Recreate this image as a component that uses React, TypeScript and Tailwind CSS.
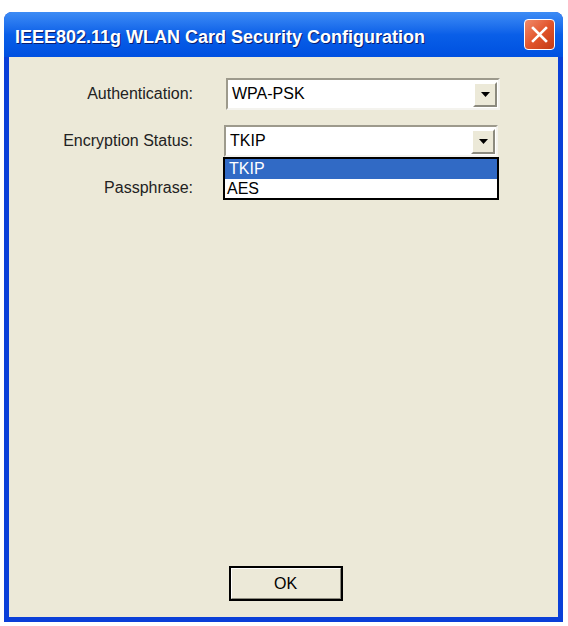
const font = { fontFamily: '"Liberation Sans", Arial, sans-serif' }

function DropButton() {
  return (
    <div className="flex h-[25px] w-[24px] items-center justify-center border-2 border-t-white border-l-white border-r-[#8c8a7e] border-b-[#8c8a7e] bg-[#ece9d8]">
      <svg width="9" height="5" viewBox="0 0 9 5">
        <path d="M0 0h9L4.5 5z" fill="#000" />
      </svg>
    </div>
  )
}

function Combo({ value }: { value: string }) {
  return (
    <div className="flex h-[32px] w-[274px] items-center justify-between border-2 border-t-[#9d9a8c] border-l-[#9d9a8c] border-r-[#f4f3ee] border-b-[#f4f3ee] bg-white pl-[4px] pr-[1px]">
      <span className="text-[16px] text-black">{value}</span>
      <DropButton />
    </div>
  )
}

export default function App() {
  return (
    <div className="h-[626px] w-[568px] bg-white pl-[4px] pt-[12px]" style={font}>
      <div className="flex h-[610px] w-[559px] flex-col overflow-hidden rounded-t-[8px] bg-[#0a3fd8]">
        {/* title bar */}
        <div className="flex h-[45px] shrink-0 items-center justify-between bg-gradient-to-b from-[#3d8cf5] via-[#0a5fe8] to-[#0050e0] pl-[11px] pr-[8px]">
          <span
            className="pt-[5px] text-[18px] font-bold text-white"
            style={{ textShadow: '1px 1px 0 #0a1e70' }}
          >
            IEEE802.11g WLAN Card Security Configuration
          </span>
          <div className="mt-[-1px] flex h-[31px] w-[31px] items-center justify-center rounded-[4px] border border-white bg-gradient-to-br from-[#f08a6a] via-[#e2552c] to-[#c33b15]">
            <svg width="17" height="17" viewBox="0 0 17 17">
              <path d="M2 2L15 15M15 2L2 15" stroke="#fff" strokeWidth="2.6" strokeLinecap="square" />
            </svg>
          </div>
        </div>

        {/* body */}
        <div className="mx-[5px] mb-[5px] flex flex-1 flex-col bg-[#ece9d8] pt-[21px] text-[16px] text-[#222]">
          <div className="flex items-center">
            <span className="w-[184px] text-right">Authentication:</span>
            <div className="ml-[33px]">
              <Combo value="WPA-PSK" />
            </div>
          </div>

          <div className="mt-[15px] flex items-center">
            <span className="w-[184px] text-right">Encryption Status:</span>
            <div className="relative ml-[31px]">
              <Combo value="TKIP" />
              <div className="absolute left-[-1px] top-[32px] z-10 w-[276px] border-2 border-black bg-white text-[16px] text-black">
                <div className="h-[20px] bg-[#316ac5] pl-[4px] leading-[20px] text-white">TKIP</div>
                <div className="h-[19px] pl-[2px] leading-[19px]">AES</div>
              </div>
            </div>
          </div>

          <div className="mt-[15px] flex h-[32px] items-center">
            <span className="w-[184px] text-right">Passphrase:</span>
          </div>

          <div className="flex-1" />

          <div className="mb-[16px] flex justify-center pl-[4px]">
            <div className="flex h-[35px] w-[114px] items-center justify-center border-2 border-black bg-[#ece9d8] text-[16px] text-black">
              <div className="flex h-full w-full items-center justify-center border border-t-white border-l-white border-r-[#8c8a7e] border-b-[#8c8a7e]">
                OK
              </div>
            </div>
          </div>
        </div>
      </div>
    </div>
  )
}
